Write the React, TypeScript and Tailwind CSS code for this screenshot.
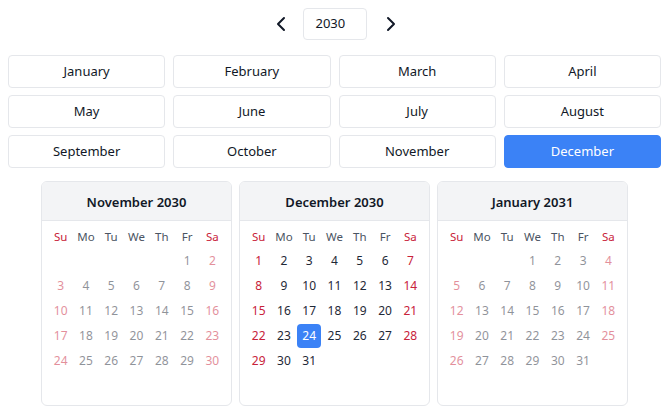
import React from "react";
import { ChevronLeft, ChevronRight } from "lucide-react";

const MONTHS = [
  "January", "February", "March", "April",
  "May", "June", "July", "August",
  "September", "October", "November", "December",
];
const WEEK = ["Su", "Mo", "Tu", "We", "Th", "Fr", "Sa"];

function cells(year: number, month: number): (number | null)[] {
  const first = new Date(year, month, 1).getDay();
  const days = new Date(year, month + 1, 0).getDate();
  const out: (number | null)[] = [];
  for (let i = 0; i < first; i++) out.push(null);
  for (let d = 1; d <= days; d++) out.push(d);
  while (out.length < 42) out.push(null);
  return out;
}

function MonthCard({ year, month, active, selected }: { year: number; month: number; active: boolean; selected?: number }) {
  const list = cells(year, month);
  return (
    <div className="w-[191px] rounded-md border border-[#e5e7eb] bg-white overflow-hidden">
      <div className="h-[39px] pt-[3px] border-b border-[#e5e7eb] bg-[#f3f4f6] flex items-center justify-center text-[13px] font-semibold text-[#111827]">
        {MONTHS[month]} {year}
      </div>
      <div className="px-[6px] pt-1 pb-[6px]">
        <div className="grid grid-cols-7 h-6 items-center text-[11.5px]">
          {WEEK.map((w, i) => (
            <div
              key={w}
              className={
                "text-center " + (i === 0 || i === 6 ? "text-[#c8223a]" : "text-[#4b5563]")
              }
            >
              {w}
            </div>
          ))}
        </div>
        <div className="grid grid-cols-7 text-[12px]">
          {list.map((d, i) => {
            const weekend = i % 7 === 0 || i % 7 === 6;
            const isSel = d !== null && d === selected;
            let color = weekend ? "text-[#c8223a]" : "text-[#1f2937]";
            if (isSel) color = "text-white";
            return (
              <div key={i} className="h-[25px] flex items-start justify-center">
                {d !== null && (
                  <div
                    className={
                      "w-6 h-6 flex items-center justify-center rounded " +
                      color +
                      (isSel ? " bg-[#3b82f6]" : "") +
                      (active ? "" : " opacity-50")
                    }
                  >
                    {d}
                  </div>
                )}
              </div>
            );
          })}
        </div>
      </div>
    </div>
  );
}

export default function App() {
  return (
    <div
      className="w-[669px] h-[416px] bg-white px-2 pt-2"
      style={{ fontFamily: '"Noto Sans", "Open Sans", sans-serif' }}
    >
      <div className="flex items-center justify-center gap-2">
        <button className="w-8 h-8 flex items-center justify-center text-[#111827] pl-1">
          <ChevronLeft size={24} strokeWidth={2} />
        </button>
        <div className="w-16 h-8 border border-[#e5e7eb] rounded flex items-center pl-3 text-[13px] text-[#111827]">
          2030
        </div>
        <button className="w-8 h-8 flex items-center justify-center text-[#111827]">
          <ChevronRight size={24} strokeWidth={2} />
        </button>
      </div>
      <div className="mt-[15px] grid grid-cols-4 gap-x-2 gap-y-[7px]">
        {MONTHS.map((m, i) => (
          <button
            key={m}
            className={
              "h-[33px] rounded border text-[13px] flex items-center justify-center " +
              (i === 11
                ? "bg-[#3b82f6] border-[#3b82f6] text-white"
                : "bg-white border-[#e5e7eb] text-[#111827]")
            }
          >
            {m}
          </button>
        ))}
      </div>
      <div className="mt-[13px] flex justify-center gap-[7px]">
        <MonthCard year={2030} month={10} active={false} />
        <MonthCard year={2030} month={11} active={true} selected={24} />
        <MonthCard year={2031} month={0} active={false} />
      </div>
    </div>
  );
}
